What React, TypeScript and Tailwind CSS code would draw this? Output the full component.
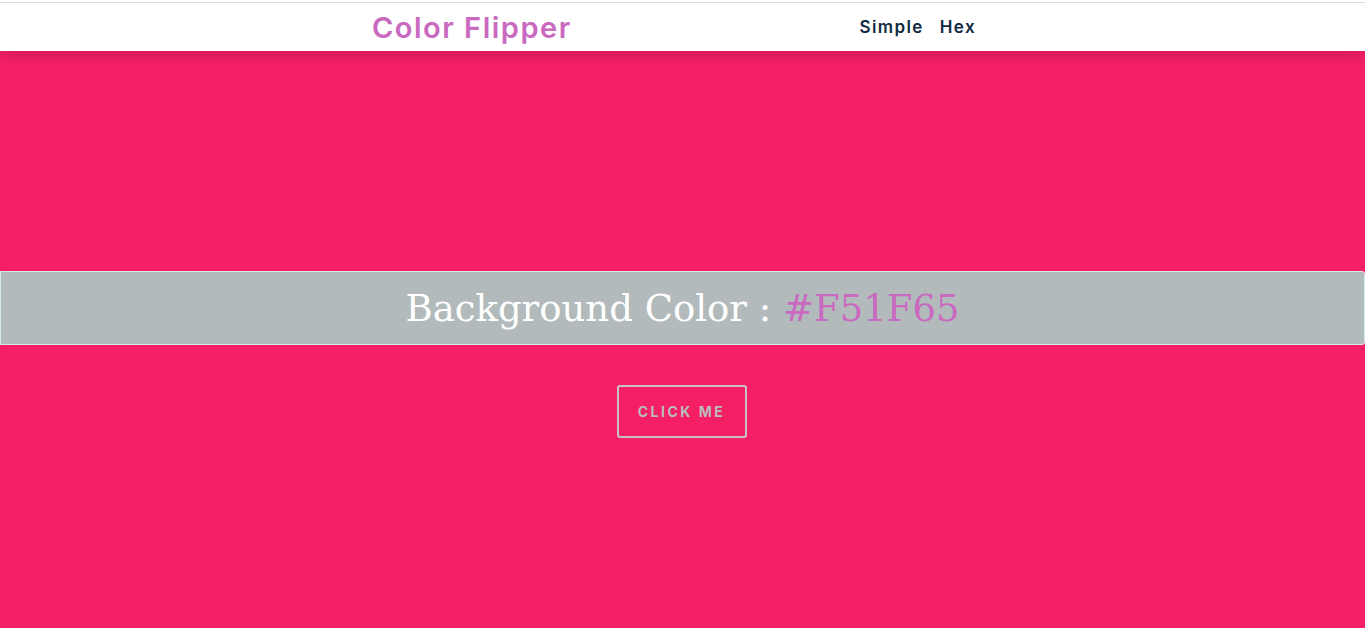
const App = () => {
    return (
        <div className="flex min-h-[628px] flex-col bg-[#f51f65]" style={{ fontFamily: "Inter, 'Open Sans', sans-serif" }}>
            {/* Шапка */}
            <nav className="relative z-10 h-[51px] bg-white pt-[2px] shadow-[0_5px_15px_rgba(0,0,0,0.15)]">
                <div className="h-full border-t border-t-[#dcdcdc]">
                    <div className="mx-auto flex h-full w-[621px] items-center justify-between pr-[17px] pt-[1px]">
                        <h4 className="text-[29px] font-semibold tracking-[1.5px] text-[#c969c0]">Color Flipper</h4>
                        <ul className="flex gap-[16px] text-[17px] font-semibold tracking-[1.4px] text-[#102a42]">
                            <li>Simple</li>
                            <li>Hex</li>
                        </ul>
                    </div>
                </div>
            </nav>

            {/* Основной контент */}
            <main className="flex flex-1 flex-col items-center pt-[220px]">
                <div className="flex h-[74px] w-full items-center justify-center rounded-r-[3px] border border-[#d6ecec] bg-[#b3babb]">
                    <h2 className="pt-[2px] text-[37px] text-white" style={{ fontFamily: "'DejaVu Serif', 'Liberation Serif', serif" }}>
                        Background Color : <span className="text-[#c969c0]">#F51F65</span>
                    </h2>
                </div>
                <button className="mt-[40px] flex h-[53px] w-[130px] -translate-x-px items-center justify-center rounded-[3px] border-2 border-[#c4c4c4] text-[14px] font-bold tracking-[2.5px] text-[#b8bdbd]">
                    CLICK ME
                </button>
            </main>
        </div>
    );
};

export default App;
